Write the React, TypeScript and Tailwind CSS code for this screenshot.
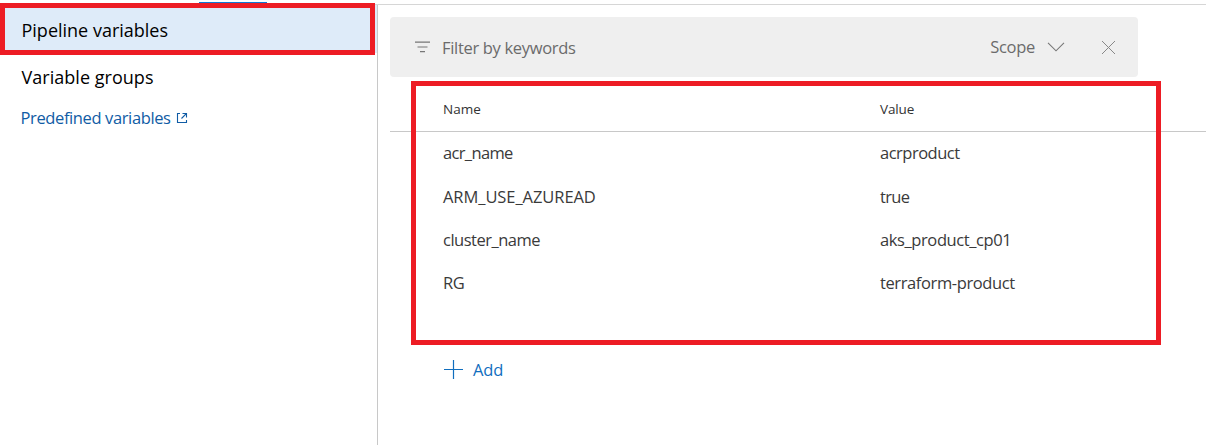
import React from "react";

const rows = [
  { name: "acr_name", value: "acrproduct", h: "h-[43px]", nt: "tracking-[-0.65px]", vt: "tracking-[-0.5px]" },
  { name: "ARM_USE_AZUREAD", value: "true", h: "h-[44px]", nt: "tracking-[-0.07px]", vt: "tracking-[-0.7px]" },
  { name: "cluster_name", value: "aks_product_cp01", h: "h-[43px]", nt: "tracking-[-0.5px]", vt: "tracking-[-0.4px]" },
  { name: "RG", value: "terraform-product", h: "h-[43px]", nt: "tracking-[-0.4px]", vt: "tracking-[-0.39px]" },
];

function Sidebar() {
  return (
    <nav className="flex w-[378px] shrink-0 flex-col border-r border-[#c8c8c8] text-black">
      <div className="flex h-[48px] items-center bg-[#deebf9] pt-0.5 pl-[21.5px]">
        <span className="text-[18px] leading-6">Pipeline variables</span>
      </div>
      <div className="flex h-[48px] items-center pl-[21.5px]">
        <span className="text-[18px] leading-6 tracking-[0.03px]">Variable groups</span>
      </div>
      <a className="flex h-[34px] items-center gap-[5.5px] pl-[20.5px] text-[#105ca5]">
        <span className="text-[16.5px] leading-6 tracking-[-0.38px]">Predefined variables</span>
        <svg className="shrink-0" width="12" height="12" viewBox="0 0 12 12" fill="none" stroke="currentColor" strokeWidth="1.1">
          <path d="M4 1.5H1.5v9h9V8M6.5 1.5h4V5.5M10.3 1.7L5.5 6.5" />
        </svg>
      </a>
    </nav>
  );
}

function FilterBar() {
  return (
    <div className="flex h-[60px] w-[748px] items-center rounded-[4px] bg-[#efefef] pl-[25px] text-[#6b6b6b]">
      <svg className="shrink-0" width="15" height="12" viewBox="0 0 15 12" fill="none" stroke="#777" strokeWidth="1.2">
        <path d="M0 1.2h15M2.5 6h10M5 10.6h5" />
      </svg>
      <span className="ml-3 grow pt-0.5 text-[16.5px] leading-6 tracking-[-0.32px]">Filter by keywords</span>
      <span className="text-[16.5px] leading-6 tracking-[-0.3px]">Scope</span>
      <svg className="ml-3 shrink-0" width="18" height="11" viewBox="0 0 18 11" fill="none" stroke="#777" strokeWidth="1.1">
        <path d="M1 .8l8 8 8-8" />
      </svg>
      <svg className="mr-[22px] ml-[36px] shrink-0" width="15" height="15" viewBox="0 0 15 15" fill="none" stroke="#888" strokeWidth="1">
        <path d="M1 1l13 13M14 1L1 14" />
      </svg>
    </div>
  );
}

export default function App() {
  return (
    <div className="relative flex h-[445px] w-[1206px] flex-col overflow-hidden bg-white font-['Open_Sans','Noto_Sans',sans-serif]">
      <header className="flex h-[5px] items-end border-b border-[#d6d6d6] pl-[199px]">
        <div className="h-[2px] w-[68px] bg-[#0f78d4]" />
      </header>
      <div className="flex min-h-0 grow">
        <Sidebar />
        <main className="flex grow flex-col pt-3 pl-3">
          <FilterBar />
          <div className="flex h-[55px] items-center border-b border-[#c8c8c8] pt-2.5 pl-[53px] text-[13.5px] text-[#333]">
            <span className="w-[437px]">Name</span>
            <span className="tracking-[-0.15px]">Value</span>
          </div>
          <div className="flex flex-col pl-[53px] text-[16.5px] text-[#3a3a3a]">
            {rows.map((r) => (
              <div key={r.name} className={`flex items-center ${r.h}`}>
                <span className={`w-[437px] ${r.nt}`}>{r.name}</span>
                <span className={r.vt}>{r.value}</span>
              </div>
            ))}
          </div>
          <button className="mt-[53px] ml-[54px] flex h-6 items-center gap-[10px] text-[#106ebe]">
            <svg className="mb-0.5 shrink-0" width="19" height="19" viewBox="0 0 19 19" fill="none" stroke="currentColor" strokeWidth="1.2">
              <path d="M9.5 0v19M0 9.5h19" />
            </svg>
            <span className="text-[16.5px] leading-6 tracking-[-0.15px]">Add</span>
          </button>
        </main>
      </div>
      <div className="pointer-events-none absolute top-[3px] left-0 h-[52px] w-[375px] border-[5px] border-[#ed1c24]" />
      <div className="pointer-events-none absolute top-[81px] left-[411px] h-[264px] w-[750px] border-[5px] border-[#ed1c24]" />
    </div>
  );
}
